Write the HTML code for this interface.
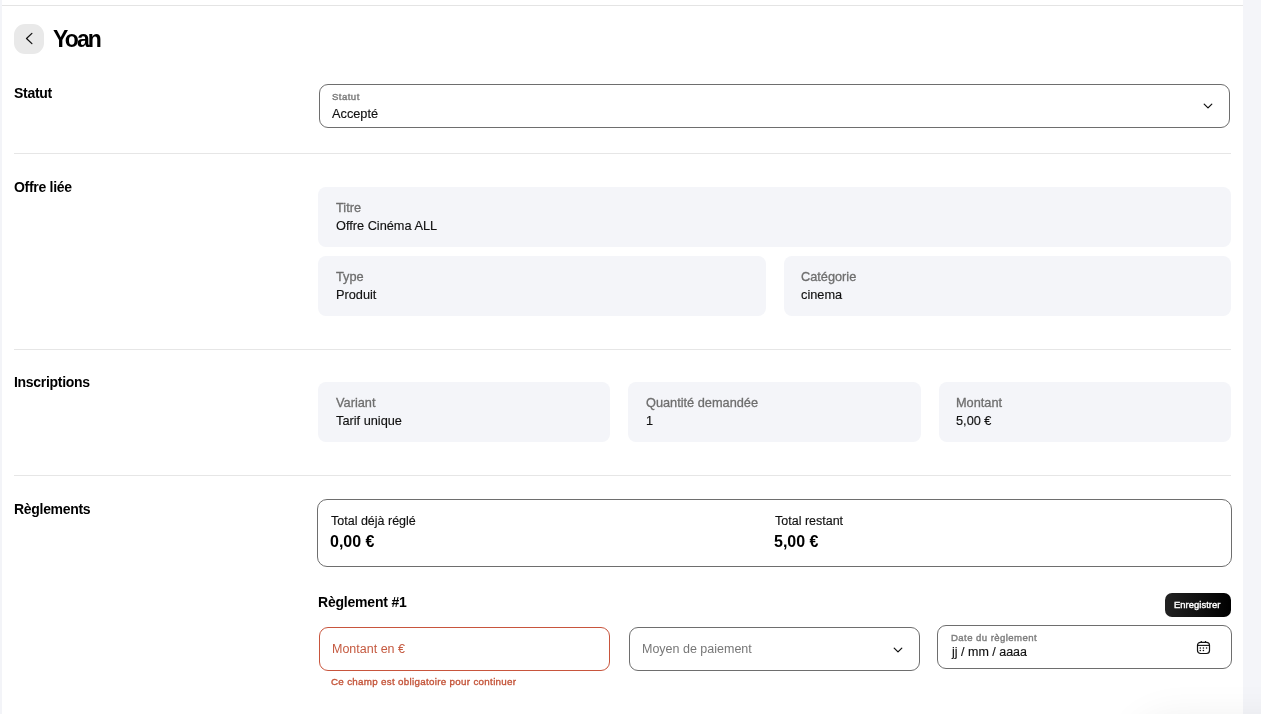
<!DOCTYPE html>
<html><head><meta charset="utf-8">
<style>
*{box-sizing:border-box;margin:0;padding:0}
html,body{width:1261px;height:714px;overflow:hidden;background:#fff}
body{position:relative;font-family:"Liberation Sans",sans-serif;color:#000}
.a{position:absolute}
.t{position:absolute;white-space:nowrap;line-height:1;will-change:transform}
.lstrip{left:0;top:0;width:2px;height:714px;background:#f3f4f8}
.rpanel{left:1243px;top:0;width:18px;height:714px;background:#f4f5f9}
.topline{left:2px;top:5px;width:1241px;height:1px;background:#e4e4e4}
.back{left:14px;top:24px;width:30px;height:30px;border-radius:11px;background:#e9e9e9}
.h1{font-size:23px;font-weight:700;letter-spacing:-1.9px}
.sec{font-size:14px;font-weight:700;letter-spacing:-0.3px}
.sep{left:14px;width:1217px;height:1px;background:#e6e6e6}
.card{background:#f4f5f9;border-radius:8px}
.lab{font-size:12.75px;color:#6e6e6e;-webkit-text-stroke:0.3px #6e6e6e}
.val{font-size:12.75px;color:#111;-webkit-text-stroke:0.15px #111}
.box{border:1px solid #6e6e6e;border-radius:9px;background:#fff}
</style></head><body>
<div class="a lstrip"></div>
<div class="a rpanel"></div>
<div class="a topline"></div>

<div class="a back"></div>
<svg class="a" style="left:14px;top:24px" width="30" height="30" viewBox="0 0 30 30"><path d="M17.9 9.4 L12.5 14.5 L17.9 19.6" fill="none" stroke="#111" stroke-width="1.25" stroke-linecap="round" stroke-linejoin="round"/></svg>
<div class="t h1" style="left:52.5px;top:28px">Yoan</div>

<!-- Statut -->
<div class="t sec" style="left:14px;top:85.5px">Statut</div>
<div class="a box" style="left:319px;top:84px;width:911px;height:43.5px"></div>
<div class="t" style="left:332px;top:91.7px;font-size:9.6px;font-weight:400;letter-spacing:0.45px;-webkit-text-stroke:0.4px #7a7a7a;color:#7a7a7a">Statut</div>
<div class="t val" style="left:332px;top:107.5px">Accepté</div>
<svg class="a" style="left:1200px;top:98px" width="16" height="16" viewBox="0 0 16 16"><path d="M4.2 6.1 L8 9.9 L11.8 6.1" fill="none" stroke="#111" stroke-width="1.25" stroke-linecap="round" stroke-linejoin="round"/></svg>

<div class="a sep" style="top:153px"></div>

<!-- Offre liee -->
<div class="t sec" style="left:14px;top:180px">Offre liée</div>
<div class="a card" style="left:318px;top:187px;width:913px;height:60px"></div>
<div class="t lab" style="left:336px;top:202px">Titre</div>
<div class="t val" style="left:336px;top:220px">Offre Cinéma ALL</div>
<div class="a card" style="left:318px;top:256px;width:447.5px;height:60px"></div>
<div class="t lab" style="left:336px;top:271px">Type</div>
<div class="t val" style="left:336px;top:289px">Produit</div>
<div class="a card" style="left:783.5px;top:256px;width:447.5px;height:60px"></div>
<div class="t lab" style="left:801px;top:271px">Catégorie</div>
<div class="t val" style="left:801px;top:289px">cinema</div>

<div class="a sep" style="top:349px"></div>

<!-- Inscriptions -->
<div class="t sec" style="left:14px;top:375px">Inscriptions</div>
<div class="a card" style="left:318px;top:382px;width:292.3px;height:60px"></div>
<div class="t lab" style="left:336px;top:397px">Variant</div>
<div class="t val" style="left:336px;top:415px">Tarif unique</div>
<div class="a card" style="left:628.3px;top:382px;width:292.3px;height:60px"></div>
<div class="t lab" style="left:646px;top:397px">Quantité demandée</div>
<div class="t val" style="left:646px;top:415px">1</div>
<div class="a card" style="left:938.7px;top:382px;width:292.3px;height:60px"></div>
<div class="t lab" style="left:956px;top:397px">Montant</div>
<div class="t val" style="left:956px;top:415px">5,00 €</div>

<div class="a sep" style="top:475px"></div>

<!-- Reglements -->
<div class="t sec" style="left:14px;top:502px">Règlements</div>
<div class="a box" style="left:317px;top:499px;width:915px;height:68px;border-radius:10px"></div>
<div class="t val" style="left:331px;top:515px;font-size:12.5px;color:#111">Total déjà réglé</div>
<div class="t" style="left:330px;top:534px;font-size:16px;font-weight:700;letter-spacing:0px">0,00 €</div>
<div class="t val" style="left:775px;top:515px;font-size:12.5px;color:#111">Total restant</div>
<div class="t" style="left:774px;top:534px;font-size:16px;font-weight:700;letter-spacing:0px">5,00 €</div>

<div class="t" style="left:318px;top:595px;font-size:14px;font-weight:700;letter-spacing:-0.2px">Règlement #1</div>
<div class="a" style="left:1165px;top:593px;width:66px;height:24px;border-radius:7px;background:linear-gradient(90deg,#222,#000)"></div>
<div class="t" style="left:1174px;top:599.5px;font-size:9.4px;font-weight:400;letter-spacing:0.05px;-webkit-text-stroke:0.4px #fff;color:#fff">Enregistrer</div>

<div class="a box" style="left:319px;top:627px;width:291px;height:43.5px;border-color:#c8553d"></div>
<div class="t" style="left:332px;top:643px;font-size:12.5px;color:#c55a40">Montant en €</div>
<div class="t" style="left:331px;top:677.3px;font-size:9.8px;font-weight:400;letter-spacing:0.3px;-webkit-text-stroke:0.35px #c4553a;color:#c4553a">Ce champ est obligatoire pour continuer</div>

<div class="a box" style="left:629px;top:627px;width:291px;height:43.5px"></div>
<div class="t" style="left:642px;top:643px;font-size:12.5px;color:#777">Moyen de paiement</div>
<svg class="a" style="left:890px;top:641.5px" width="16" height="16" viewBox="0 0 16 16"><path d="M4.2 6.1 L8 9.9 L11.8 6.1" fill="none" stroke="#111" stroke-width="1.25" stroke-linecap="round" stroke-linejoin="round"/></svg>

<div class="a box" style="left:937px;top:625px;width:295px;height:43.5px"></div>
<div class="t" style="left:951px;top:632.5px;font-size:9.6px;font-weight:400;letter-spacing:0.42px;-webkit-text-stroke:0.4px #7e7e7e;color:#7e7e7e">Date du règlement</div>
<div class="t val" style="left:952px;top:645.5px;font-size:12.5px">jj / mm / aaaa</div>
<svg class="a" style="left:1196px;top:640px" width="15" height="15" viewBox="0 0 15 15"><rect x="1.5" y="2.3" width="12" height="11.2" rx="3" fill="none" stroke="#111" stroke-width="1.2"/><line x1="1.5" y1="5.4" x2="13.5" y2="5.4" stroke="#111" stroke-width="1.1"/><line x1="5.3" y1="1" x2="5.3" y2="3" stroke="#111" stroke-width="1.2"/><line x1="9.5" y1="1" x2="9.5" y2="3" stroke="#111" stroke-width="1.2"/><circle cx="4.3" cy="8" r="0.8" fill="#111"/><circle cx="7.4" cy="8" r="0.8" fill="#111"/><circle cx="10.6" cy="8" r="0.8" fill="#111"/><circle cx="4.3" cy="10.5" r="0.8" fill="#111"/><circle cx="7.4" cy="10.5" r="0.8" fill="#111"/></svg>

<div class="a" style="left:1140px;top:724px;width:300px;height:100px;border-radius:30px;background:#fff;box-shadow:0 0 40px 6px rgba(0,0,0,0.07)"></div>
</body></html>
